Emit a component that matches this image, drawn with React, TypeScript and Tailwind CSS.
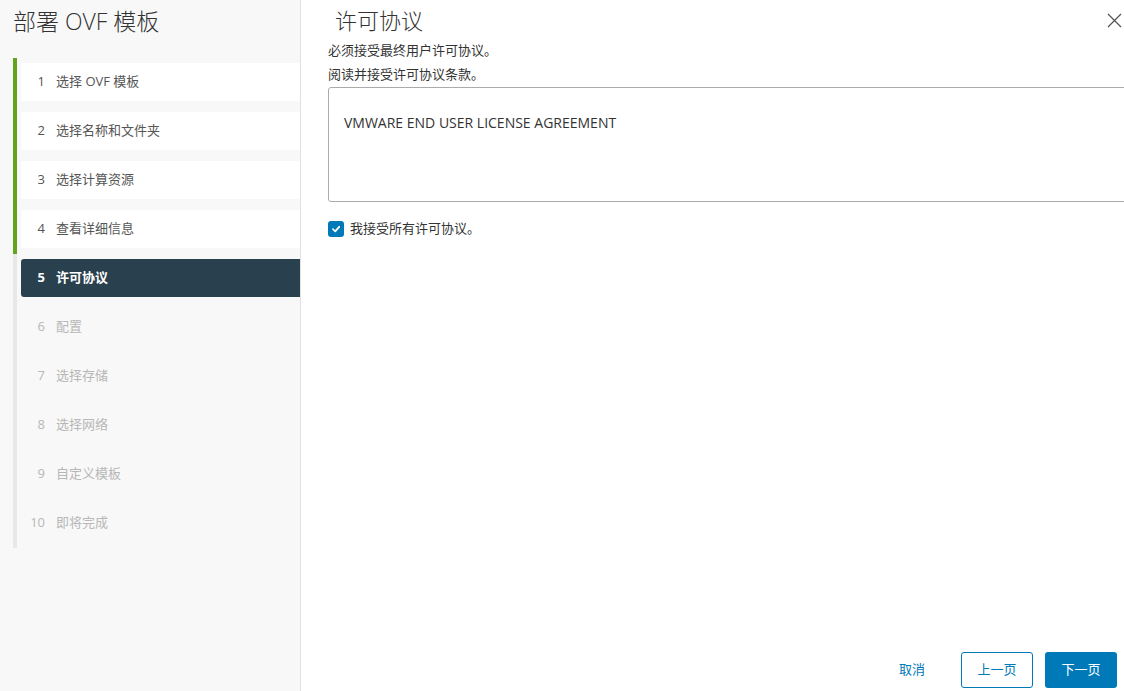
import React from "react";

const steps = [
  { n: "1", t: "选择 OVF 模板", s: "done" },
  { n: "2", t: "选择名称和文件夹", s: "done" },
  { n: "3", t: "选择计算资源", s: "done" },
  { n: "4", t: "查看详细信息", s: "done" },
  { n: "5", t: "许可协议", s: "active" },
  { n: "6", t: "配置", s: "todo" },
  { n: "7", t: "选择存储", s: "todo" },
  { n: "8", t: "选择网络", s: "todo" },
  { n: "9", t: "自定义模板", s: "todo" },
  { n: "10", t: "即将完成", s: "todo" },
];

export default function App() {
  return (
    <div
      className="flex h-[691px] w-[1124px] overflow-hidden bg-white text-[#333]"
      style={{ fontFamily: '"Open Sans", "Noto Sans CJK SC", sans-serif' }}
    >
      <aside className="flex w-[301px] shrink-0 flex-col border-r border-[#e2e2e2] bg-[#f8f8f8]">
        <div className="flex h-[42px] items-center pl-[13px] text-[23px] font-light text-[#333]">
          部署 OVF 模板
        </div>
        <ul className="mt-[16px] ml-[13px] flex flex-col">
          {steps.map((s) => (
            <li
              key={s.n}
              className={
                "h-[49px] border-l-4 pt-[5px] pb-[6px] pl-[4px] " +
                (s.s === "done" ? "border-[#62a420]" : "border-[#e8e8e8]")
              }
            >
              <div
                className={
                  "flex h-[38px] items-center text-[13px] " +
                  (s.s === "done"
                    ? "bg-white text-[#565656]"
                    : s.s === "active"
                    ? "rounded-l-[3px] bg-[#29414e] font-bold text-white"
                    : "text-[#b7b7b7]")
                }
              >
                <span className="w-[24px] text-right">{s.n}</span>
                <span className="ml-[11px]">{s.t}</span>
              </div>
            </li>
          ))}
        </ul>
      </aside>

      <main className="flex min-w-0 flex-1 flex-col overflow-hidden">
        <div className="flex h-[38px] shrink-0 items-center justify-between pt-[2px] pr-0 pl-[34px]">
          <h1 className="text-[22px] font-light leading-none text-[#333]">许可协议</h1>
          <button className="flex h-[20px] w-[20px] items-center justify-center text-[#555]">
            <svg width="15" height="15" viewBox="0 0 15 15" fill="none" stroke="currentColor" strokeWidth="1.3">
              <path d="M1 1L14 14M14 1L1 14" />
            </svg>
          </button>
        </div>
        <div className="pl-[27px]">
          <p className="text-[13px] leading-[24px] text-[#333]">必须接受最终用户许可协议。</p>
          <p className="text-[13px] leading-[24px] text-[#333]">阅读并接受许可协议条款。</p>
          <div className="mt-px h-[115px] w-[830px] rounded-[3px] border border-[#ababab] pt-[26px] pl-[15px] text-[14px] leading-[18px] text-[#333]">
            VMWARE END USER LICENSE AGREEMENT
          </div>
          <label className="mt-[17px] flex items-center gap-[6px] text-[13px] text-[#333]">
            <span className="flex h-[16px] w-[16px] items-center justify-center rounded-[3px] bg-[#0079b8]">
              <svg width="10" height="10" viewBox="0 0 10 10" fill="none" stroke="white" strokeWidth="1.8" strokeLinecap="round" strokeLinejoin="round">
                <path d="M2 5.2L4.2 7.3L8.2 2.8" />
              </svg>
            </span>
            我接受所有许可协议。
          </label>
        </div>
        <div className="mt-auto flex items-center justify-end gap-[12px] pr-[7px] pb-[3px]">
          <button className="mr-[14px] h-[36px] px-[10px] text-[13px] text-[#0079b8]">取消</button>
          <button className="h-[36px] w-[72px] rounded-[3px] border border-[#0079b8] bg-white text-[13px] text-[#0079b8]">
            上一页
          </button>
          <button className="h-[36px] w-[72px] rounded-[3px] bg-[#0079b8] text-[13px] text-white">下一页</button>
        </div>
      </main>
    </div>
  );
}
